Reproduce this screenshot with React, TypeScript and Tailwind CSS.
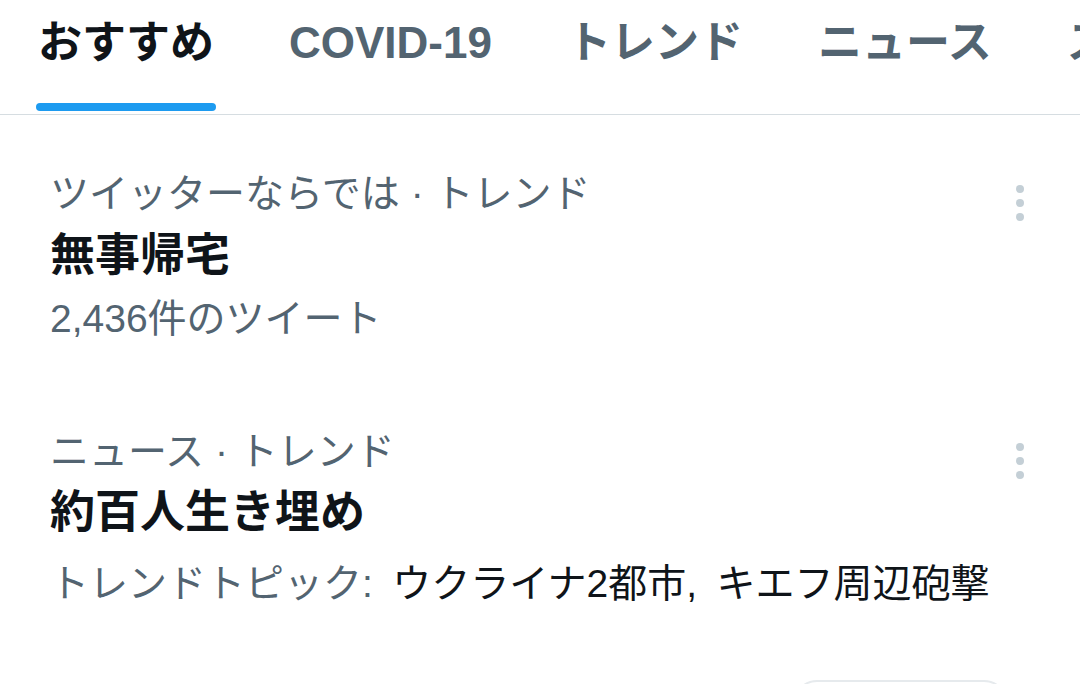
import React from "react";

const font = { fontFamily: '"Liberation Sans", "Noto Sans CJK JP", sans-serif' };

const tabs = ["おすすめ", "COVID-19", "トレンド", "ニュース", "スポーツ"];

const Dots = () => {
  return (
    <div className="mt-[15px] flex flex-col gap-[6px]">
      <span className="block w-[8px] h-[8px] rounded-full bg-[#c4cfd6]" />
      <span className="block w-[8px] h-[8px] rounded-full bg-[#c4cfd6]" />
      <span className="block w-[8px] h-[8px] rounded-full bg-[#c4cfd6]" />
    </div>
  );
};

const App = () => {
  return (
    <div className="w-[1080px] h-[684px] overflow-hidden bg-white" style={font}>
      {/* tab bar */}
      <div className="flex h-[115px] border-b border-[#d6dde1] pl-[38px] gap-[75px] whitespace-nowrap overflow-hidden">
        {tabs.map((t, i) => (
          <div key={t} className="flex flex-col items-stretch shrink-0">
            <div
              className={
                i === 0
                  ? "mt-[17px] text-[44px] leading-[52px] font-bold text-[#0f1419]"
                  : "mt-[17px] text-[44px] leading-[52px] font-bold text-[#536471]"
              }
            >
              {t}
            </div>
            {i === 0 && <div className="mt-[34px] h-[8px] -mx-[2px] rounded-full bg-[#1d9bf0]" />}
          </div>
        ))}
      </div>

      <div className="pt-[13px]">
        {/* trend 1 */}
        <div className="flex pl-[50px] pr-[56px] pt-[42px] pb-[43px]">
          <div className="flex-1">
            <div className="text-[39px] leading-[48px] text-[#536471]">ツイッターならでは · トレンド</div>
            <div className="mt-[9px] text-[45px] leading-[58px] font-bold text-[#0f1419]">無事帰宅</div>
            <div className="mt-[10px] text-[39px] leading-[48px] text-[#536471]">2,436件のツイート</div>
          </div>
          <Dots />
        </div>

        {/* trend 2 */}
        <div className="flex pl-[50px] pr-[56px] py-[42px]">
          <div className="flex-1">
            <div className="text-[39px] leading-[48px] text-[#536471]">ニュース · トレンド</div>
            <div className="mt-[8px] text-[45px] leading-[58px] font-bold text-[#0f1419]">約百人生き埋め</div>
            <div className="mt-[18px] text-[39px] leading-[48px] text-[#536471] whitespace-nowrap">
              トレンドトピック:{"\u2002"}
              <span className="text-[#0f1419]">ウクライナ2都市,{"\u2002"}キエフ周辺砲撃</span>
            </div>
          </div>
          <Dots />
        </div>

        {/* next item thumbnail peeking in */}
        <div className="flex justify-end pr-[72px] pt-[30px]">
          <div className="w-[215px] h-[215px] rounded-[24px] border-2 border-[#e6eaed]" />
        </div>
      </div>
    </div>
  );
};

export default App;
